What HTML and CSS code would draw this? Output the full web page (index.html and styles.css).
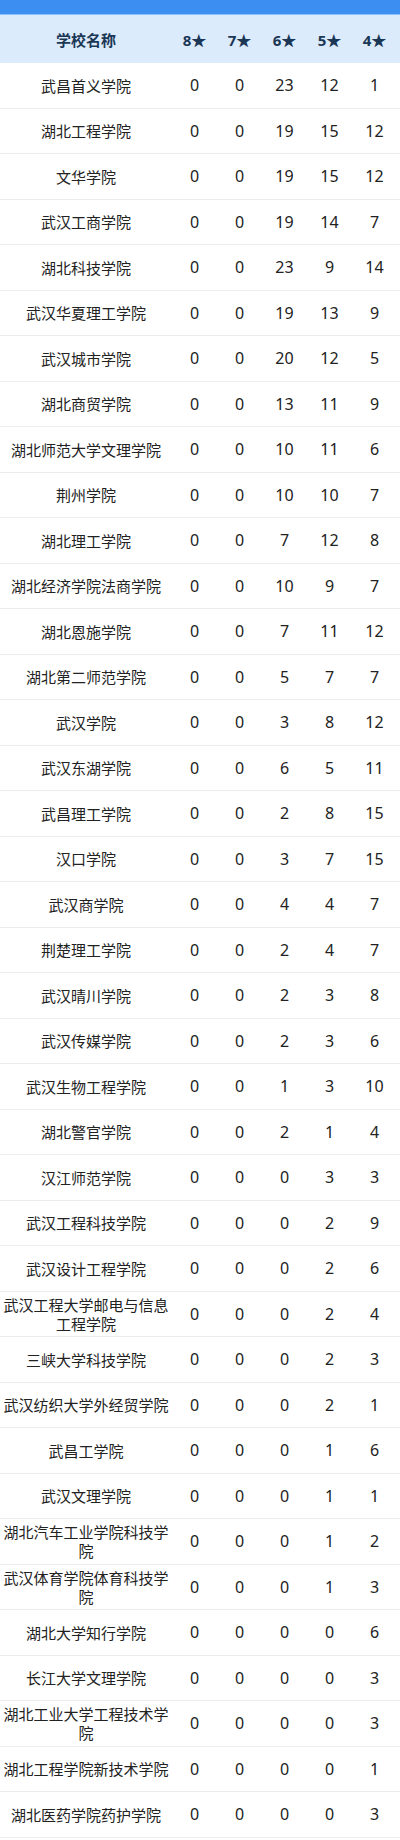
FILE: index.html
```html
<!DOCTYPE html>
<html lang="zh-CN">
<head>
<meta charset="utf-8">
<title>学校星级统计</title>
<link rel="stylesheet" href="styles.css">
</head>
<body>
<div class="topbar"></div>
<div class="table">
  <div class="row head">
    <div class="name">学校名称</div><div>8★</div><div>7★</div><div>6★</div><div>5★</div><div>4★</div>
  </div>
  <div class="row"><div class="name">武昌首义学院</div><div>0</div><div>0</div><div>23</div><div>12</div><div>1</div></div>
  <div class="row"><div class="name">湖北工程学院</div><div>0</div><div>0</div><div>19</div><div>15</div><div>12</div></div>
  <div class="row"><div class="name">文华学院</div><div>0</div><div>0</div><div>19</div><div>15</div><div>12</div></div>
  <div class="row"><div class="name">武汉工商学院</div><div>0</div><div>0</div><div>19</div><div>14</div><div>7</div></div>
  <div class="row"><div class="name">湖北科技学院</div><div>0</div><div>0</div><div>23</div><div>9</div><div>14</div></div>
  <div class="row"><div class="name">武汉华夏理工学院</div><div>0</div><div>0</div><div>19</div><div>13</div><div>9</div></div>
  <div class="row"><div class="name">武汉城市学院</div><div>0</div><div>0</div><div>20</div><div>12</div><div>5</div></div>
  <div class="row"><div class="name">湖北商贸学院</div><div>0</div><div>0</div><div>13</div><div>11</div><div>9</div></div>
  <div class="row"><div class="name">湖北师范大学文理学院</div><div>0</div><div>0</div><div>10</div><div>11</div><div>6</div></div>
  <div class="row"><div class="name">荆州学院</div><div>0</div><div>0</div><div>10</div><div>10</div><div>7</div></div>
  <div class="row"><div class="name">湖北理工学院</div><div>0</div><div>0</div><div>7</div><div>12</div><div>8</div></div>
  <div class="row"><div class="name">湖北经济学院法商学院</div><div>0</div><div>0</div><div>10</div><div>9</div><div>7</div></div>
  <div class="row"><div class="name">湖北恩施学院</div><div>0</div><div>0</div><div>7</div><div>11</div><div>12</div></div>
  <div class="row"><div class="name">湖北第二师范学院</div><div>0</div><div>0</div><div>5</div><div>7</div><div>7</div></div>
  <div class="row"><div class="name">武汉学院</div><div>0</div><div>0</div><div>3</div><div>8</div><div>12</div></div>
  <div class="row"><div class="name">武汉东湖学院</div><div>0</div><div>0</div><div>6</div><div>5</div><div>11</div></div>
  <div class="row"><div class="name">武昌理工学院</div><div>0</div><div>0</div><div>2</div><div>8</div><div>15</div></div>
  <div class="row"><div class="name">汉口学院</div><div>0</div><div>0</div><div>3</div><div>7</div><div>15</div></div>
  <div class="row"><div class="name">武汉商学院</div><div>0</div><div>0</div><div>4</div><div>4</div><div>7</div></div>
  <div class="row"><div class="name">荆楚理工学院</div><div>0</div><div>0</div><div>2</div><div>4</div><div>7</div></div>
  <div class="row"><div class="name">武汉晴川学院</div><div>0</div><div>0</div><div>2</div><div>3</div><div>8</div></div>
  <div class="row"><div class="name">武汉传媒学院</div><div>0</div><div>0</div><div>2</div><div>3</div><div>6</div></div>
  <div class="row"><div class="name">武汉生物工程学院</div><div>0</div><div>0</div><div>1</div><div>3</div><div>10</div></div>
  <div class="row"><div class="name">湖北警官学院</div><div>0</div><div>0</div><div>2</div><div>1</div><div>4</div></div>
  <div class="row"><div class="name">汉江师范学院</div><div>0</div><div>0</div><div>0</div><div>3</div><div>3</div></div>
  <div class="row"><div class="name">武汉工程科技学院</div><div>0</div><div>0</div><div>0</div><div>2</div><div>9</div></div>
  <div class="row"><div class="name">武汉设计工程学院</div><div>0</div><div>0</div><div>0</div><div>2</div><div>6</div></div>
  <div class="row"><div class="name">武汉工程大学邮电与信息工程学院</div><div>0</div><div>0</div><div>0</div><div>2</div><div>4</div></div>
  <div class="row"><div class="name">三峡大学科技学院</div><div>0</div><div>0</div><div>0</div><div>2</div><div>3</div></div>
  <div class="row"><div class="name">武汉纺织大学外经贸学院</div><div>0</div><div>0</div><div>0</div><div>2</div><div>1</div></div>
  <div class="row"><div class="name">武昌工学院</div><div>0</div><div>0</div><div>0</div><div>1</div><div>6</div></div>
  <div class="row"><div class="name">武汉文理学院</div><div>0</div><div>0</div><div>0</div><div>1</div><div>1</div></div>
  <div class="row"><div class="name">湖北汽车工业学院科技学院</div><div>0</div><div>0</div><div>0</div><div>1</div><div>2</div></div>
  <div class="row"><div class="name">武汉体育学院体育科技学院</div><div>0</div><div>0</div><div>0</div><div>1</div><div>3</div></div>
  <div class="row"><div class="name">湖北大学知行学院</div><div>0</div><div>0</div><div>0</div><div>0</div><div>6</div></div>
  <div class="row"><div class="name">长江大学文理学院</div><div>0</div><div>0</div><div>0</div><div>0</div><div>3</div></div>
  <div class="row"><div class="name">湖北工业大学工程技术学院</div><div>0</div><div>0</div><div>0</div><div>0</div><div>3</div></div>
  <div class="row"><div class="name">湖北工程学院新技术学院</div><div>0</div><div>0</div><div>0</div><div>0</div><div>1</div></div>
  <div class="row"><div class="name">湖北医药学院药护学院</div><div>0</div><div>0</div><div>0</div><div>0</div><div>3</div></div>
</div>
</body>
</html>
```
FILE: styles.css
```css
html, body {
  margin: 0;
  padding: 0;
  background: #ffffff;
}
body {
  width: 400px;
  overflow: hidden;
  font-family: "Noto Sans", "Noto Sans CJK SC", sans-serif;
  color: #222222;
}
.topbar {
  height: 14px;
  background: #3c8ef0;
  border-bottom: 1px solid #8cc0f6;
}
.table {
  width: 400px;
}
.row {
  display: grid;
  grid-template-columns: 172px repeat(5, 45px) 3px;
  height: 45.5px;
  box-sizing: border-box;
  border-bottom: 1px solid #ececec;
  font-size: 16px;
}
.row > div {
  display: flex;
  align-items: center;
  justify-content: center;
  text-align: center;
}
.row .name {
  font-family: "Noto Sans CJK SC", sans-serif;
  font-size: 15px;
  line-height: 19px;
  padding: 0 2px;
}
.row.head {
  height: 48px;
  background: #dcebfb;
  border-bottom: none;
  color: #1b3756;
  font-weight: 700;
  font-size: 15px;
}
.row.head .name {
  font-weight: 700;
}
```
